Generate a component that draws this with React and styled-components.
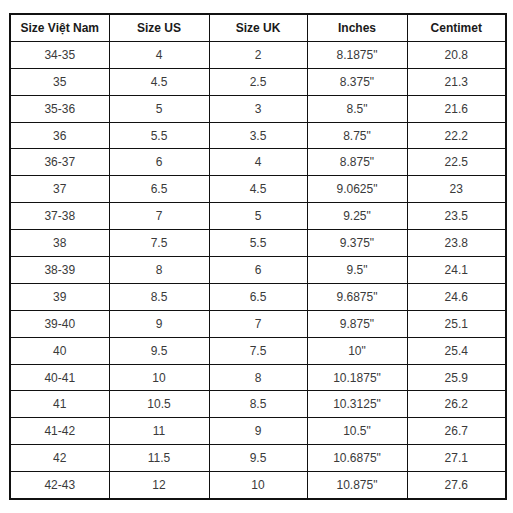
import React from "react";
import styled, { createGlobalStyle } from "styled-components";

const GlobalStyle = createGlobalStyle`
  html, body {
    margin: 0;
    padding: 0;
    background: #fff;
  }
`;

const Page = styled.div`
  padding: 13px 0 0 9px;
  font-family: "Liberation Sans", Arial, sans-serif;
`;

const Table = styled.table`
  width: 496px;
  border-collapse: collapse;
  table-layout: fixed;
  border: 2px solid #111;
`;

const Cell = styled.td`
  height: 25.9px;
  padding: 0;
  border: 1px solid #111;
  text-align: center;
  vertical-align: middle;
  font-size: 12px;
  color: ${(p) => (p.$head ? "#1a1a1a" : "#3a3a3a")};
  font-weight: ${(p) => (p.$head ? 700 : 400)};
`;

const headers = ["Size Việt Nam", "Size US", "Size UK", "Inches", "Centimet"];
const widths = [99, 100, 98, 100, 99];

const rows = [
  ["34-35", "4", "2", "8.1875\"", "20.8"],
  ["35", "4.5", "2.5", "8.375\"", "21.3"],
  ["35-36", "5", "3", "8.5\"", "21.6"],
  ["36", "5.5", "3.5", "8.75\"", "22.2"],
  ["36-37", "6", "4", "8.875\"", "22.5"],
  ["37", "6.5", "4.5", "9.0625\"", "23"],
  ["37-38", "7", "5", "9.25\"", "23.5"],
  ["38", "7.5", "5.5", "9.375\"", "23.8"],
  ["38-39", "8", "6", "9.5\"", "24.1"],
  ["39", "8.5", "6.5", "9.6875\"", "24.6"],
  ["39-40", "9", "7", "9.875\"", "25.1"],
  ["40", "9.5", "7.5", "10\"", "25.4"],
  ["40-41", "10", "8", "10.1875\"", "25.9"],
  ["41", "10.5", "8.5", "10.3125\"", "26.2"],
  ["41-42", "11", "9", "10.5\"", "26.7"],
  ["42", "11.5", "9.5", "10.6875\"", "27.1"],
  ["42-43", "12", "10", "10.875\"", "27.6"],
];

const App = () => {
  return (
    <>
      <GlobalStyle />
      <Page>
        <Table>
          <colgroup>
            {widths.map((w, i) => (
              <col key={i} style={{ width: w }} />
            ))}
          </colgroup>
          <thead>
            <tr>
              {headers.map((h) => (
                <Cell as="th" $head key={h}>
                  {h}
                </Cell>
              ))}
            </tr>
          </thead>
          <tbody>
            {rows.map((r, i) => (
              <tr key={i}>
                {r.map((v, j) => (
                  <Cell key={j}>{v}</Cell>
                ))}
              </tr>
            ))}
          </tbody>
        </Table>
      </Page>
    </>
  );
};

export default App;
